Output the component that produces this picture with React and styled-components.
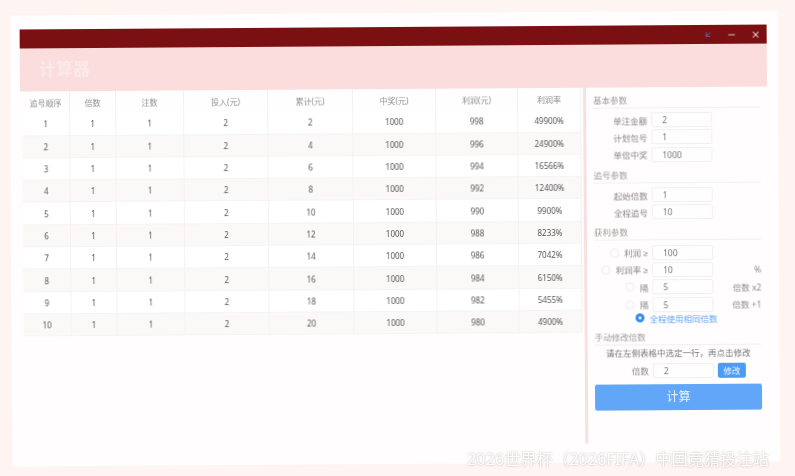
import styled, { createGlobalStyle } from "styled-components";
import { ArrowDownLeft, Minus, X } from "lucide-react";

const GlobalStyle = createGlobalStyle`
  html, body {
    margin: 0;
    padding: 0;
    background: #fef4f1;
    overflow: hidden;
  }
  * {
    box-sizing: border-box;
  }
`;

const columns = [
  "追号顺序",
  "倍数",
  "注数",
  "投入(元)",
  "累计(元)",
  "中奖(元)",
  "利润(元)",
  "利润率",
];

const rows = [
  [1, 1, 1, 2, 2, 1000, 998, "49900%"],
  [2, 1, 1, 2, 4, 1000, 996, "24900%"],
  [3, 1, 1, 2, 6, 1000, 994, "16566%"],
  [4, 1, 1, 2, 8, 1000, 992, "12400%"],
  [5, 1, 1, 2, 10, 1000, 990, "9900%"],
  [6, 1, 1, 2, 12, 1000, 988, "8233%"],
  [7, 1, 1, 2, 14, 1000, 986, "7042%"],
  [8, 1, 1, 2, 16, 1000, 984, "6150%"],
  [9, 1, 1, 2, 18, 1000, 982, "5455%"],
  [10, 1, 1, 2, 20, 1000, 980, "4900%"],
];

function App() {
  return (
    <>
      <GlobalStyle />
      <Page>
        <Frame>
          <Window>
            <TitleBar>
              <WinButton $color="#6f74c4">
                <ArrowDownLeft size={9} strokeWidth={2} />
              </WinButton>
              <WinButton>
                <Minus size={10} strokeWidth={2} />
              </WinButton>
              <WinButton>
                <X size={10} strokeWidth={2.4} />
              </WinButton>
            </TitleBar>
            <Header>计算器</Header>
            <Body>
              <TablePane>
                <TableGrid>
                  {columns.map((c) => (
                    <HeadCell key={c}>{c}</HeadCell>
                  ))}
                  {rows.map((row, i) =>
                    row.map((v, j) => (
                      <Cell key={i + "-" + j} $odd={i % 2 === 1}>
                        {v}
                      </Cell>
                    ))
                  )}
                </TableGrid>
              </TablePane>
              <Divider />
              <Side>
                <Section>基本参数</Section>
                <Fields>
                  <Field><Label>单注金额</Label><Input>2</Input></Field>
                  <Field><Label>计划包号</Label><Input>1</Input></Field>
                  <Field><Label>单倍中奖</Label><Input>1000</Input></Field>
                </Fields>
                <Section>追号参数</Section>
                <Fields>
                  <Field><Label>起始倍数</Label><Input>1</Input></Field>
                  <Field><Label>全程追号</Label><Input>10</Input></Field>
                </Fields>
                <Section>获利参数</Section>
                <Fields>
                  <Field><Label><Radio />利润 ≥</Label><Input>100</Input></Field>
                  <Field><Label><Radio />利润率 ≥</Label><Input>10</Input><Suffix>%</Suffix></Field>
                  <Field><Label><Radio />隔</Label><Input>5</Input><Suffix>倍数 x2</Suffix></Field>
                  <Field><Label><Radio />隔</Label><Input>5</Input><Suffix>倍数 +1</Suffix></Field>
                </Fields>
                <SameRow><Radio $on />全程使用相同倍数</SameRow>
                <Section $tight>手动修改倍数</Section>
                <Hint>请在左侧表格中选定一行，再点击修改</Hint>
                <Field>
                  <Label>倍数</Label>
                  <Input>2</Input>
                  <SmallButton>修改</SmallButton>
                </Field>
                <CalcButton>计算</CalcButton>
              </Side>
            </Body>
          </Window>
        </Frame>
        <Watermark>2026世界杯（2026FIFA）中国竞猜投注站</Watermark>
      </Page>
    </>
  );
}

export default App;

const Page = styled.div`
  position: relative;
  width: 795px;
  height: 476px;
  padding: 13px 16px 12px 11px;
  background: #fef4f1;
  font-family: "Noto Sans", "Noto Sans CJK SC", sans-serif;
  overflow: hidden;
`;

const Frame = styled.div`
  height: 100%;
  padding: 14px 11px 0 10px;
  background: #fffdfd;
  transform: rotate(-0.38deg);
  filter: blur(0.6px);
`;

const Window = styled.div`
  display: flex;
  flex-direction: column;
  height: 100%;
`;

const TitleBar = styled.div`
  display: flex;
  justify-content: flex-end;
  align-items: center;
  gap: 8px;
  height: 19px;
  padding-right: 3px;
  background: #7a1012;
`;

const WinButton = styled.span`
  display: flex;
  justify-content: center;
  align-items: center;
  width: 16px;
  height: 16px;
  color: ${(p) => p.$color || "#f7e6e6"};
`;

const Header = styled.div`
  height: 43px;
  padding: 9px 0 0 19px;
  background: #fadddc;
  color: #fce9e9;
  font-size: 17px;
  font-weight: 700;
  line-height: 24px;
`;

const Body = styled.div`
  display: flex;
  flex: 1;
  min-height: 0;
`;

const TablePane = styled.div`
  width: 561px;
  padding-left: 2px;
`;

const TableGrid = styled.div`
  display: grid;
  grid-template-columns: 48px 46px 68px 84px 85px 83px 82px 63px;
  grid-auto-rows: 22.3px;
`;

const HeadCell = styled.div`
  display: flex;
  justify-content: center;
  align-items: center;
  height: 23px;
  background: #fffefe;
  border-right: 1px solid #f5f1f1;
  border-bottom: 1px solid #f3eeee;
  color: #928d8d;
  font-size: 8px;
`;

const Cell = styled.div`
  display: flex;
  justify-content: center;
  align-items: center;
  background: ${(p) => (p.$odd ? "#fbf8f8" : "#ffffff")};
  border-right: 1px solid #f5f1f1;
  border-bottom: 1px solid #f7f3f3;
  color: #555;
  font-size: 8px;
`;

const Divider = styled.div`
  width: 3px;
  margin: 0 0 19px 2px;
  background: #f8dfe0;
`;

const Side = styled.div`
  flex: 1;
  padding: 6px 7px 0 7px;
`;

const Section = styled.div`
  margin-top: ${(p) => (p.$tight ? "5px" : "0")};
  padding-bottom: 1px;
  border-bottom: 1px solid #f3efef;
  color: #a09b9b;
  font-size: 8.5px;
  line-height: 13px;
`;

const Fields = styled.div`
  display: flex;
  flex-direction: column;
  margin: 3px 0 5px;
`;

const Field = styled.div`
  display: flex;
  align-items: center;
  height: 17.3px;
`;

const Label = styled.div`
  display: flex;
  justify-content: flex-end;
  align-items: center;
  width: 54px;
  margin-right: 4px;
  color: #8a8585;
  font-family: "Liberation Sans", "Noto Sans CJK SC", sans-serif;
  font-size: 8.5px;
  white-space: nowrap;
`;

const Radio = styled.span`
  flex: none;
  width: 9px;
  height: 9px;
  margin-right: 5px;
  border-radius: 50%;
  border: ${(p) => (p.$on ? "3px solid #2f8cf0" : "1px solid #ece8e8")};
  background: #fff;
`;

const Input = styled.div`
  width: 61px;
  height: 15px;
  padding-left: 10px;
  background: #fffefe;
  border: 1px solid #f2eeee;
  border-radius: 2px;
  color: #777;
  font-size: 8.5px;
  line-height: 13px;
`;

const Suffix = styled.div`
  margin-left: auto;
  color: #8f8a8a;
  font-size: 8.5px;
  white-space: nowrap;
`;

const SameRow = styled.div`
  display: flex;
  align-items: center;
  height: 14px;
  margin: -7px 0 0 41px;
  color: #5ea6f5;
  font-size: 8.5px;
`;

const Hint = styled.div`
  margin: 1px 0 3px;
  color: #777;
  font-size: 8.5px;
  line-height: 13px;
  text-align: center;
`;

const SmallButton = styled.div`
  width: 28px;
  height: 15px;
  margin-left: 4px;
  background: #4b9cf5;
  border-radius: 2px;
  color: #eef6ff;
  font-size: 8.5px;
  line-height: 15px;
  text-align: center;
`;

const CalcButton = styled.div`
  margin-top: 5px;
  height: 26px;
  background: #62a6f7;
  border-radius: 2px;
  color: #eef6ff;
  font-size: 12px;
  line-height: 25px;
  text-align: center;
`;

const Watermark = styled.div`
  position: absolute;
  left: 467px;
  top: 448px;
  color: #ffffff;
  font-size: 16px;
  letter-spacing: 0.2px;
  line-height: 22px;
  white-space: nowrap;
  text-shadow: 0 0 2px rgba(120, 95, 95, 0.5);
  filter: blur(0.5px);
`;
